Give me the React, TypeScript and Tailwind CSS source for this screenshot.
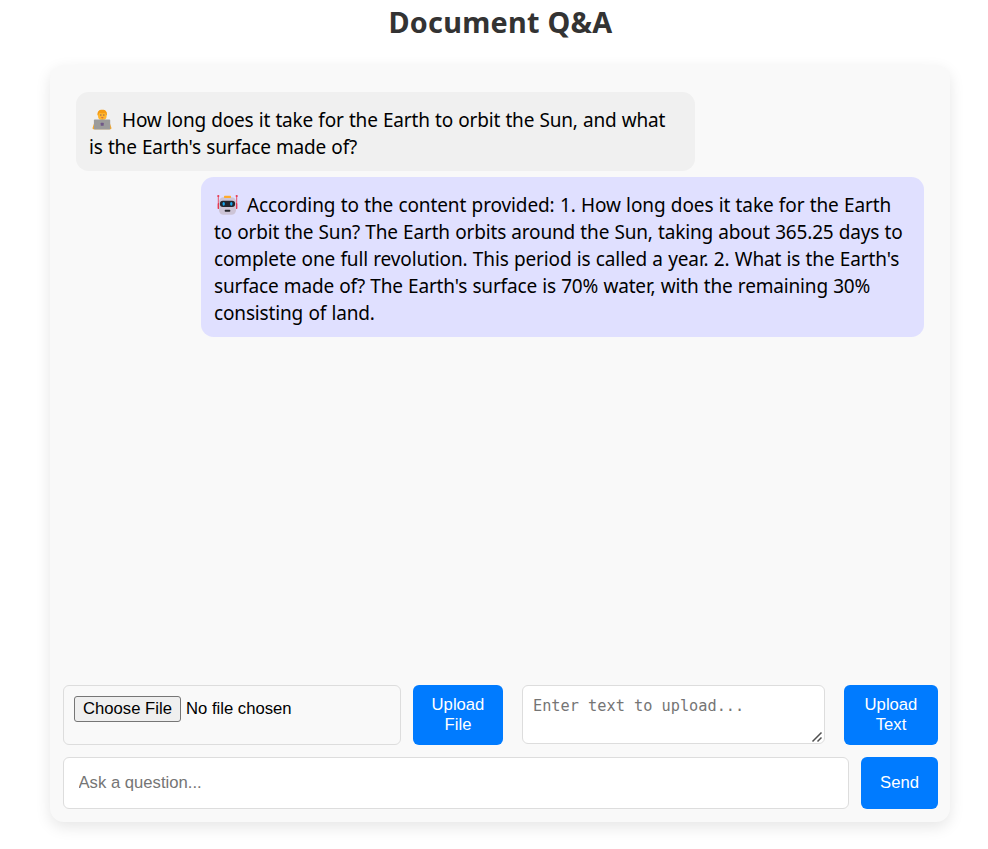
function Technologist() {
  return (
    <svg viewBox="0 0 22 23" className="mt-px mr-[9px] ml-[2px] h-[23px] w-[22px] shrink-0">
      <path d="M3 21.3c-1.2 0-1.700-.6-1.400-1.500L3.200 15c.6-2 2-3 4-3h7.600c2 0 3.400 1 4 3l1.600 4.800c.3.900-.2 1.500-1.400 1.500z" fill="#f9a825" />
      <rect x="7" y="2" width="8.600" height="10" rx="4" fill="#ffb52e" />
      <path d="M6.500 7.500c-.3-3.800 1.300-5.800 4.700-5.800s5.100 2 4.700 5.800c-1.100-.6-1.500-1.800-1.700-2.700-1.800.5-4.200.5-6 0-.2.900-.6 2.100-1.700 2.700z" fill="#f59b13" />
      <rect x="9.200" y="6.400" width="1.200" height="1.300" fill="#8d6558" />
      <rect x="12.200" y="6.400" width="1.200" height="1.300" fill="#8d6558" />
      <path d="M9.800 9.300h3l-1.500 1.200z" fill="#c85a4b" />
      <rect x="2.900" y="11.600" width="16.300" height="10" rx=".8" fill="#9b9b9b" />
      <rect x="9.700" y="14.700" width="3" height="3" rx=".5" fill="#6f5787" />
    </svg>
  );
}

function Robot() {
  return (
    <svg viewBox="0 0 22 22" className="mt-[2px] mr-[8px] ml-[3px] h-[22px] w-[22px] shrink-0">
      <path d="M1.300 2v13M19.700 2v13" stroke="#e8536c" strokeWidth="1" />
      <circle cx="1.300" cy="2" r="1.100" fill="#e63950" />
      <circle cx="19.700" cy="2" r="1.100" fill="#e63950" />
      <rect x=".7" y="9" width="2.500" height="6" rx="1" fill="#e63950" />
      <rect x="17.800" y="9" width="2.500" height="6" rx="1" fill="#e63950" />
      <rect x="2" y="3.200" width="17" height="17.600" rx="4.500" fill="#cdc4d6" />
      <rect x="7" y="1.700" width="7" height="2.200" rx=".6" fill="#ffab2d" />
      <rect x="2.900" y="6.700" width="15.200" height="6.200" rx="3" fill="#24242c" />
      <ellipse cx="6.700" cy="9.800" rx="1.200" ry="1.900" fill="#16a6ee" />
      <ellipse cx="14.300" cy="9.800" rx="1.200" ry="1.900" fill="#16a6ee" />
      <rect x="7.700" y="15.800" width="5.600" height="1.900" rx=".7" fill="#26252b" />
    </svg>
  );
}

const field = "rounded-[6px] border border-[#ddd]";
const button =
  "flex shrink-0 items-center justify-center rounded-[6px] bg-[#007bff] text-center text-[16.67px] leading-[20px] text-white";

export default function App() {
  return (
    <div className="h-[849px] overflow-hidden bg-white font-['Noto_Sans',sans-serif] text-black">
      <h1 className="h-[65px] pt-[2px] pl-[13px] text-center text-[28.8px] leading-[40px] font-bold tracking-[0.25px] text-[#333]">
        Document Q&amp;A
      </h1>

      <main className="ml-[50px] flex h-[757px] w-[900px] flex-col rounded-[14px] bg-[#f9f9f9] pr-[12px] pb-[13px] pl-[13px] shadow-[0_5px_15px_rgba(0,0,0,0.1)]">
        <section className="flex flex-1 flex-col pt-[27px] pr-[14px] pl-[13px] text-[19px] leading-[27px] whitespace-nowrap [word-spacing:0.5px]">
          <div className="h-[79px] w-[619px] rounded-[12.5px] bg-[#f0f0f0] pt-[15px] pl-[13px]">
            <p className="flex h-[27px] tracking-[-0.18px]">
              <Technologist />
              How long does it take for the Earth to orbit the Sun, and what
            </p>
            <p className="tracking-[-0.18px]">is the Earth's surface made of?</p>
          </div>
          <div className="mt-[6px] h-[160px] w-[723px] self-end rounded-[12.5px] bg-[#e0e0ff] pt-[15px] pl-[13px]">
            <p className="flex h-[27px] tracking-[-0.11px]">
              <Robot />
              According to the content provided: 1. How long does it take for the Earth
            </p>
            <p className="tracking-[-0.17px]">
              to orbit the Sun? The Earth orbits around the Sun, taking about 365.25 days to
            </p>
            <p className="tracking-[-0.13px]">
              complete one full revolution. This period is called a year. 2. What is the Earth's
            </p>
            <p className="tracking-[-0.17px]">
              surface made of? The Earth's surface is 70% water, with the remaining 30%
            </p>
            <p className="tracking-[-0.15px]">consisting of land.</p>
          </div>
        </section>

        <div className="flex h-[60px] items-start font-['Liberation_Sans',Arial,sans-serif] text-[16.67px]">
          <label className={`${field} flex h-[60px] w-[338px] shrink-0 items-start gap-[5px] pt-[10px] pl-[10px]`}>
            <span className="flex h-[26px] w-[107px] items-center justify-center rounded-[3px] border border-[#767676] bg-[#efefef] leading-[20px]">
              Choose File
            </span>
            <span className="leading-[25px]">No file chosen</span>
          </label>
          <button className={`${button} ml-[12px] h-[60px] w-[90px]`}>
            Upload
            <br />
            File
          </button>
          <div className={`${field} ml-[19px] flex h-[59px] w-[303px] shrink-0 justify-between bg-white pl-[10px]`}>
            <span className="pt-[10px] font-['DejaVu_Sans_Mono',monospace] text-[15.25px] leading-[20px] text-[#757575]">
              Enter text to upload...
            </span>
            <svg viewBox="0 0 12 12" className="mr-[1px] h-[12px] w-[12px] self-end" fill="none">
              <path d="M1.500 10.500 10.500 1.500M6.500 10.500l4-4" stroke="#505050" strokeWidth="1.500" />
            </svg>
          </div>
          <button className={`${button} ml-[19px] h-[60px] w-[94px]`}>
            Upload
            <br />
            Text
          </button>
        </div>

        <div className="mt-[12px] flex h-[52px] gap-[12px] font-['Liberation_Sans',Arial,sans-serif]">
          <input
            className={`${field} w-[786px] shrink-0 bg-white pl-[14.5px] text-[16.67px] text-[#757575] placeholder:text-[#757575]`}
            placeholder="Ask a question..."
          />
          <button className={`${button} w-[77px]`}>Send</button>
        </div>
      </main>
    </div>
  );
}
